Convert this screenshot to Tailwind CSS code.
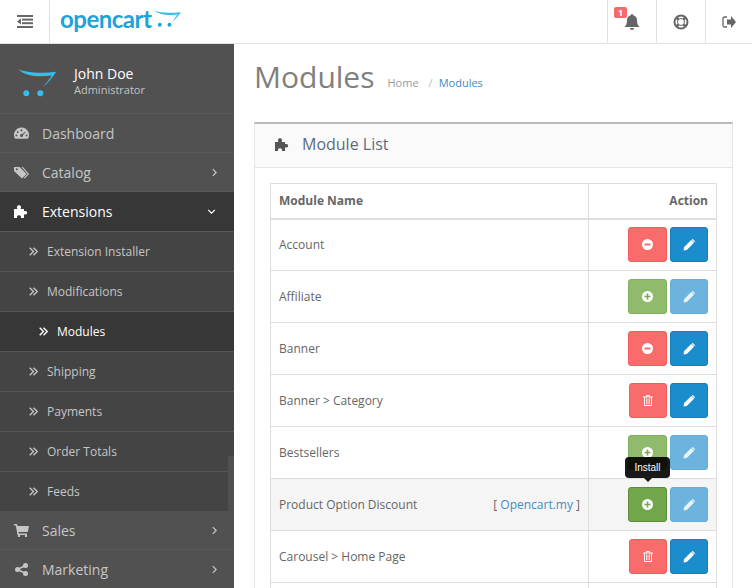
<!DOCTYPE html>
<html lang="en">
<head>
    <meta charset="UTF-8">
    <title>Modules</title>
    <script src="https://cdn.jsdelivr.net/npm/@tailwindcss/browser@4"></script>
</head>
<body class="h-[588px] w-[752px] overflow-hidden bg-white font-['Open_Sans',sans-serif] text-[#666]">
    <!-- header -->
    <header class="flex h-[44px] border-b border-[#e1e1e1] bg-white">
        <div class="flex w-[50px] items-center justify-center border-r border-[#e1e1e1]">
            <svg class="h-[13px] w-[16px]" viewBox="0 0 16 13" fill="#666">
                <rect x="0" y="0" width="16" height="2"/><rect x="5" y="3.600" width="11" height="2"/><rect x="5" y="7.200" width="11" height="2"/><rect x="0" y="11" width="16" height="2"/><path d="M4 3.500v6L0 6.500z"/>
            </svg>
        </div>
        <div class="flex flex-1 items-center pl-[10px]">
            <span class="mt-[-5px] text-[24px] leading-none font-bold tracking-[-0.5px] text-[#1ca3db] font-['Lato',sans-serif]">opencart</span>
            <svg class="mt-[-6px] ml-[3px] h-[19px] w-[28px]" viewBox="0 0 29 19">
                <path d="M0 1c6 3 16 3 28 2-2 3-6 7-10 11 3-4 5-7 6-9C16 7 6 6 0 1z" fill="#35bdf0"/>
                <circle cx="6" cy="16" r="2" fill="#1ca3db"/><circle cx="16" cy="16" r="2" fill="#1ca3db"/>
            </svg>
        </div>
        <div class="relative flex w-[49px] items-center justify-center border-l border-[#e1e1e1]">
            <span class="absolute top-[7px] left-[6px] rounded-[2px] bg-[#f56b6b] px-[4px] text-[9px] leading-[11px] font-bold text-white">1</span>
            <svg class="mt-[1px] h-[16px] w-[16px]" viewBox="0 0 16 16" fill="#666"><path d="M8 0a1 1 0 0 1 1 1.200C11.500 1.700 13 3.500 13 6c0 4 1 5.500 2.500 7h-15C2 11.500 3 10 3 6c0-2.500 1.500-4.300 4-4.800A1 1 0 0 1 8 0zM6 14h4a2 2 0 0 1-4 0z"/></svg>
        </div>
        <div class="flex w-[49px] items-center justify-center border-l border-[#e1e1e1]">
            <svg class="h-[16px] w-[16px]" viewBox="0 0 16 16" fill="none" stroke="#666"><circle cx="8" cy="8" r="6.500" stroke-width="2"/><circle cx="8" cy="8" r="3.500" stroke-width="1"/><path d="M3.500 3.500l2 2M12.500 3.500l-2 2M3.500 12.500l2-2M12.500 12.500l-2-2" stroke-width="2.500"/></svg>
        </div>
        <div class="flex w-[47px] items-center justify-center border-l border-[#e1e1e1]">
            <svg class="h-[12px] w-[14px]" viewBox="0 0 14 12" fill="#666"><path d="M9 0l5 6-5 6V8.500H5v-5h4z"/><path d="M5 1H2.500A1.500 1.500 0 0 0 1 2.500v7A1.500 1.500 0 0 0 2.500 11H5" fill="none" stroke="#666" stroke-width="1.300"/></svg>
        </div>
    </header>

    <div class="flex h-[544px] overflow-hidden">
        <!-- sidebar -->
        <aside class="relative h-[544px] w-[234px] shrink-0 overflow-hidden bg-[#515151]">
            <div class="flex h-[70px] items-center border-b border-[#5a5a5a] pt-[2px] pl-[17px]">
                <svg class="mt-[6px] h-[29px] w-[41px]" viewBox="0 0 42 31">
                    <path d="M0 1c9 4 26 5 41 3-3 5-9 12-14 17 3-5 8-10 9-13C24 10 8 9 0 1z" fill="#35bdf0"/>
                    <circle cx="9" cy="27" r="3.200" fill="#35bdf0"/><circle cx="24" cy="27" r="3.200" fill="#35bdf0"/>
                </svg>
                <div class="ml-[16px]">
                    <div class="text-[14px] leading-[19px] text-white">John Doe</div>
                    <div class="text-[11px] leading-[13px] text-[#c4c4c4]">Administrator</div>
                </div>
            </div>

            <a class="flex h-[39px] items-center border-b border-[#5a5a5a] pl-[14px] text-[14px] text-[#c6c6c6]">
                <svg class="mr-[13px] h-[13px] w-[15px]" viewBox="0 0 16 13" fill="#c6c6c6"><path fill-rule="evenodd" d="M8 0a8 8 0 0 1 6.800 12.200H1.200A8 8 0 0 1 8 0zM8 2a1 1 0 1 0 0 2 1 1 0 0 0 0-2zM4 4a1 1 0 1 0 0 2 1 1 0 0 0 0-2zM12 4.500L8.600 7.300a1.500 1.500 0 1 0 .9.900L12.700 5zM2.500 7.500a1 1 0 1 0 0 2 1 1 0 0 0 0-2zM13.500 7.500a1 1 0 1 0 0 2 1 1 0 0 0 0-2z"/></svg>
                Dashboard
            </a>
            <a class="flex h-[39px] items-center border-b border-[#5a5a5a] pl-[14px] pr-[17px] text-[14px] text-[#c6c6c6]">
                <svg class="mr-[13px] h-[13px] w-[15px]" viewBox="0 0 16 13" fill="#c6c6c6"><path fill-rule="evenodd" d="M0 .5h6l7.500 7.500-5 5L0 5zM3 2a1 1 0 1 0 0 2 1 1 0 0 0 0-2z"/><path d="M8 .5h1.500L16 8l-4.500 5-1-.8L14.500 8z"/></svg>
                <span class="flex-1">Catalog</span>
                <svg class="h-[9px] w-[5px]" viewBox="0 0 6 10" fill="none" stroke="#c6c6c6" stroke-width="1.500"><path d="M1 1l4 4-4 4"/></svg>
            </a>
            <a class="flex h-[40px] items-center border-b border-[#5a5a5a] bg-[#373737] pl-[14px] pr-[18px] text-[14px] text-white">
                <svg class="mr-[13px] h-[13px] w-[15px]" viewBox="0 0 15 13" fill="#fff"><path d="M0 4h3.500c-1-1-.9-3.800 1.500-3.800S7.500 3 6.500 4H10v2h1.500a1.700 1.700 0 0 1 0 3.400H10V13H6.800c.6-1 .2-2.800-1.800-2.800S2.600 12 3.200 13H0z"/></svg>
                <span class="flex-1">Extensions</span>
                <svg class="h-[5px] w-[9px]" viewBox="0 0 10 6" fill="none" stroke="#fff" stroke-width="1.500"><path d="M1 1l4 4 4-4"/></svg>
            </a>

            <div class="bg-[#444]">
                <a class="flex h-[40px] items-center border-b border-[#555] pl-[29px] text-[12px] text-[#c6c6c6]">
                    <svg class="mr-[9px] h-[9px] w-[9px]" viewBox="0 0 9 9" fill="none" stroke="#c6c6c6" stroke-width="1.400"><path d="M.7.7L4.500 4.500 .7 8.300M4.500.7L8.300 4.500 4.500 8.300"/></svg>
                    Extension Installer
                </a>
                <a class="flex h-[40px] items-center border-b border-[#555] pl-[29px] text-[12px] text-[#c6c6c6]">
                    <svg class="mr-[9px] h-[9px] w-[9px]" viewBox="0 0 9 9" fill="none" stroke="#c6c6c6" stroke-width="1.400"><path d="M.7.7L4.500 4.500 .7 8.300M4.500.7L8.300 4.500 4.500 8.300"/></svg>
                    Modifications
                </a>
                <a class="flex h-[40px] items-center border-b border-[#555] bg-[#373737] pl-[39px] text-[12px] text-white">
                    <svg class="mr-[9px] h-[9px] w-[9px]" viewBox="0 0 9 9" fill="none" stroke="#fff" stroke-width="1.400"><path d="M.7.7L4.500 4.500 .7 8.300M4.500.7L8.300 4.500 4.500 8.300"/></svg>
                    Modules
                </a>
                <a class="flex h-[40px] items-center border-b border-[#555] pl-[29px] text-[12px] text-[#c6c6c6]">
                    <svg class="mr-[9px] h-[9px] w-[9px]" viewBox="0 0 9 9" fill="none" stroke="#c6c6c6" stroke-width="1.400"><path d="M.7.7L4.500 4.500 .7 8.300M4.500.7L8.300 4.500 4.500 8.300"/></svg>
                    Shipping
                </a>
                <a class="flex h-[40px] items-center border-b border-[#555] pl-[29px] text-[12px] text-[#c6c6c6]">
                    <svg class="mr-[9px] h-[9px] w-[9px]" viewBox="0 0 9 9" fill="none" stroke="#c6c6c6" stroke-width="1.400"><path d="M.7.7L4.500 4.500 .7 8.300M4.500.7L8.300 4.500 4.500 8.300"/></svg>
                    Payments
                </a>
                <a class="flex h-[40px] items-center border-b border-[#555] pl-[29px] text-[12px] text-[#c6c6c6]">
                    <svg class="mr-[9px] h-[9px] w-[9px]" viewBox="0 0 9 9" fill="none" stroke="#c6c6c6" stroke-width="1.400"><path d="M.7.7L4.500 4.500 .7 8.300M4.500.7L8.300 4.500 4.500 8.300"/></svg>
                    Order Totals
                </a>
                <a class="flex h-[39px] items-center pl-[29px] text-[12px] text-[#c6c6c6]">
                    <svg class="mr-[9px] h-[9px] w-[9px]" viewBox="0 0 9 9" fill="none" stroke="#c6c6c6" stroke-width="1.400"><path d="M.7.7L4.500 4.500 .7 8.300M4.500.7L8.300 4.500 4.500 8.300"/></svg>
                    Feeds
                </a>
            </div>

            <a class="flex h-[39px] items-center border-b border-[#5a5a5a] pl-[14px] pr-[17px] text-[14px] text-[#c6c6c6]">
                <svg class="mr-[13px] h-[13px] w-[15px]" viewBox="0 0 15 13" fill="#c6c6c6"><path d="M0 0h3l.5 2H15l-1.200 6H4.500l.3 1.500H13V11H3.500L1.800 1.500H0z"/><circle cx="5" cy="12" r="1.200"/><circle cx="12" cy="12" r="1.200"/></svg>
                <span class="flex-1">Sales</span>
                <svg class="h-[9px] w-[5px]" viewBox="0 0 6 10" fill="none" stroke="#c6c6c6" stroke-width="1.500"><path d="M1 1l4 4-4 4"/></svg>
            </a>
            <a class="flex h-[38px] items-center pl-[14px] pr-[17px] text-[14px] text-[#c6c6c6]">
                <svg class="mr-[13px] h-[13px] w-[15px]" viewBox="0 0 15 13" fill="#c6c6c6"><circle cx="11.500" cy="2.500" r="2.500"/><circle cx="3.500" cy="6.500" r="2.500"/><circle cx="11.500" cy="10.500" r="2.500"/><path d="M11.500 2.500l-8 4 8 4" fill="none" stroke="#c6c6c6" stroke-width="1.500"/></svg>
                <span class="flex-1">Marketing</span>
                <svg class="h-[9px] w-[5px]" viewBox="0 0 6 10" fill="none" stroke="#c6c6c6" stroke-width="1.500"><path d="M1 1l4 4-4 4"/></svg>
            </a>

            <!-- scrollbar thumb -->
            <div class="absolute top-[412px] right-0 h-[55px] w-[6px] bg-[#505050]"></div>
        </aside>

        <!-- content -->
        <main class="h-[544px] min-w-0 flex-1 overflow-hidden pt-[12px] pl-[20px] pr-[19px]">
            <div class="flex items-start">
                <h1 class="text-[30px] leading-[41px] font-normal text-[#808080]">Modules</h1>
                <div class="mt-[19px] ml-[13px] flex text-[11px] text-[#999]">
                    <span>Home</span><span class="mr-[6px] ml-[10px] text-[#bbb]">/</span><span class="text-[#428bca]">Modules</span>
                </div>
            </div>

            <section class="mt-[25px] h-[480px] overflow-hidden border border-t-[2px] border-[#e5e5e5] border-t-[#bbb]">
                <div class="flex h-[44px] items-center border-b border-[#e5e5e5] bg-[#fafafa] pb-[3px] pl-[20px] text-[16px] text-[#5d6b7d]">
                    <svg class="mr-[12px] h-[13px] w-[15px]" viewBox="0 0 15 13" fill="#555"><path d="M0 4h3.500c-1-1-.9-3.800 1.500-3.800S7.500 3 6.500 4H10v2h1.500a1.700 1.700 0 0 1 0 3.400H10V13H6.800c.6-1 .2-2.800-1.800-2.800S2.600 12 3.200 13H0z"/></svg>
                    Module List
                </div>
                <div class="px-[15px] pt-[15px]">
                    <table class="w-full table-fixed border-collapse text-[12px]">
                        <thead>
                            <tr class="h-[35px]">
                                <th class="border border-b-[2px] border-[#ddd] pl-[8px] text-left text-[12px] font-bold text-[#666]">Module Name</th>
                                <th class="w-[128px] border border-b-[2px] border-[#ddd] pr-[8px] text-right text-[12px] font-bold text-[#666]">Action</th>
                            </tr>
                        </thead>
                        <tbody>
                            <tr class="h-[52px]">
                                <td class="border border-[#ddd] pl-[8px]">Account</td>
                                <td class="border border-[#ddd] pr-[8px]">
                                    <div class="flex justify-end gap-[3px]">
                                        <button class="flex h-[35px] w-[39px] items-center justify-center rounded-[3px] border border-[#f25a5e] bg-[#f96c6c]">
                                            <svg class="h-[11px] w-[11px]" viewBox="0 0 11 11"><circle cx="5.500" cy="5.500" r="5.500" fill="#fff"/><rect x="2.500" y="4.500" width="6" height="2" fill="#f96c6c"/></svg>
                                        </button>
                                        <button class="flex h-[35px] w-[38px] items-center justify-center rounded-[3px] border border-[#1a7fb5] bg-[#1b8dcd]">
                                            <svg class="h-[12px] w-[12px]" viewBox="0 0 12 12" fill="#fff"><path d="M8.200 1L11 3.800 3.800 11 .5 11.500 1 8.200zM9 .4a1 1 0 0 1 1.300 0l1.300 1.300a1 1 0 0 1 0 1.300l-.3.300L8.700.7z"/></svg>
                                        </button>
                                    </div>
                                </td>
                            </tr>
                            <tr class="h-[52px]">
                                <td class="border border-[#ddd] pl-[8px]">Affiliate</td>
                                <td class="border border-[#ddd] pr-[8px]">
                                    <div class="flex justify-end gap-[3px]">
                                        <button class="flex h-[35px] w-[39px] items-center justify-center rounded-[3px] border border-[#82ae60] bg-[#90ba6c]">
                                            <svg class="h-[11px] w-[11px]" viewBox="0 0 11 11"><circle cx="5.500" cy="5.500" r="5.500" fill="#fff"/><path d="M2.500 4.700h2.200V2.500h1.600v2.200h2.200v1.600H6.300v2.200H4.700V6.300H2.500z" fill="#76a84c"/></svg>
                                        </button>
                                        <button class="flex h-[35px] w-[38px] items-center justify-center rounded-[3px] border border-[#66aed6] bg-[#6cb4de]">
                                            <svg class="h-[12px] w-[12px]" viewBox="0 0 12 12" fill="#fff" opacity=".85"><path d="M8.200 1L11 3.800 3.800 11 .5 11.500 1 8.200zM9 .4a1 1 0 0 1 1.300 0l1.300 1.300a1 1 0 0 1 0 1.300l-.3.300L8.700.7z"/></svg>
                                        </button>
                                    </div>
                                </td>
                            </tr>
                            <tr class="h-[52px]">
                                <td class="border border-[#ddd] pl-[8px]">Banner</td>
                                <td class="border border-[#ddd] pr-[8px]">
                                    <div class="flex justify-end gap-[3px]">
                                        <button class="flex h-[35px] w-[39px] items-center justify-center rounded-[3px] border border-[#f25a5e] bg-[#f96c6c]">
                                            <svg class="h-[11px] w-[11px]" viewBox="0 0 11 11"><circle cx="5.500" cy="5.500" r="5.500" fill="#fff"/><rect x="2.500" y="4.500" width="6" height="2" fill="#f96c6c"/></svg>
                                        </button>
                                        <button class="flex h-[35px] w-[38px] items-center justify-center rounded-[3px] border border-[#1a7fb5] bg-[#1b8dcd]">
                                            <svg class="h-[12px] w-[12px]" viewBox="0 0 12 12" fill="#fff"><path d="M8.200 1L11 3.800 3.800 11 .5 11.500 1 8.200zM9 .4a1 1 0 0 1 1.300 0l1.300 1.300a1 1 0 0 1 0 1.300l-.3.300L8.700.7z"/></svg>
                                        </button>
                                    </div>
                                </td>
                            </tr>
                            <tr class="h-[52px]">
                                <td class="border border-[#ddd] pl-[8px]">Banner &gt; Category</td>
                                <td class="border border-[#ddd] pr-[8px]">
                                    <div class="flex justify-end gap-[3px]">
                                        <button class="flex h-[35px] w-[38px] items-center justify-center rounded-[3px] border border-[#f25a5e] bg-[#f96c6c]">
                                            <svg class="h-[11px] w-[10px]" viewBox="0 0 10 11" fill="none" stroke="#fff"><path d="M0 2h10M3.500 2V.5h3V2M1.500 2v8.500h7V2" stroke-width="1"/><path d="M3.500 3.500v5.500M5 3.500v5.500M6.500 3.500v5.500" stroke-width=".7"/></svg>
                                        </button>
                                        <button class="flex h-[35px] w-[38px] items-center justify-center rounded-[3px] border border-[#1a7fb5] bg-[#1b8dcd]">
                                            <svg class="h-[12px] w-[12px]" viewBox="0 0 12 12" fill="#fff"><path d="M8.200 1L11 3.800 3.800 11 .5 11.500 1 8.200zM9 .4a1 1 0 0 1 1.300 0l1.300 1.300a1 1 0 0 1 0 1.300l-.3.300L8.700.7z"/></svg>
                                        </button>
                                    </div>
                                </td>
                            </tr>
                            <tr class="h-[52px]">
                                <td class="border border-[#ddd] pl-[8px]">Bestsellers</td>
                                <td class="border border-[#ddd] pr-[8px]">
                                    <div class="flex justify-end gap-[3px]">
                                        <button class="flex h-[35px] w-[39px] items-center justify-center rounded-[3px] border border-[#82ae60] bg-[#90ba6c]">
                                            <svg class="h-[11px] w-[11px]" viewBox="0 0 11 11"><circle cx="5.500" cy="5.500" r="5.500" fill="#fff"/><path d="M2.500 4.700h2.200V2.500h1.600v2.200h2.200v1.600H6.300v2.200H4.700V6.300H2.500z" fill="#76a84c"/></svg>
                                        </button>
                                        <button class="flex h-[35px] w-[38px] items-center justify-center rounded-[3px] border border-[#66aed6] bg-[#6cb4de]">
                                            <svg class="h-[12px] w-[12px]" viewBox="0 0 12 12" fill="#fff" opacity=".85"><path d="M8.200 1L11 3.800 3.800 11 .5 11.500 1 8.200zM9 .4a1 1 0 0 1 1.300 0l1.300 1.300a1 1 0 0 1 0 1.300l-.3.300L8.700.7z"/></svg>
                                        </button>
                                    </div>
                                </td>
                            </tr>
                            <tr class="h-[52px] bg-[#f5f5f5]">
                                <td class="border border-[#ddd] pl-[8px]">
                                    <div class="flex justify-between pr-[8px]">
                                        <span>Product Option Discount</span>
                                        <span class="text-[#666]">[ <span class="text-[#428bca]">Opencart.my</span> ]</span>
                                    </div>
                                </td>
                                <td class="border border-[#ddd] pr-[8px]">
                                    <div class="flex justify-end gap-[3px]">
                                        <div class="relative">
                                            <button class="flex h-[35px] w-[39px] items-center justify-center rounded-[3px] border border-[#5f8b3c] bg-[#72a64a]">
                                                <svg class="h-[11px] w-[11px]" viewBox="0 0 11 11"><circle cx="5.500" cy="5.500" r="5.500" fill="#fff"/><path d="M2.500 4.700h2.200V2.500h1.600v2.200h2.200v1.600H6.300v2.200H4.700V6.300H2.500z" fill="#76a84c"/></svg>
                                            </button>
                                            <div class="absolute top-[-30px] left-[-3px] flex h-[21px] w-[45px] items-center justify-center rounded-[4px] bg-black/90 font-['Liberation_Sans',sans-serif] text-[10px] text-white">
                                                Install
                                                <span class="absolute bottom-[-4px] left-[19px] h-0 w-0 border-x-[4px] border-t-[4px] border-x-transparent border-t-black/90"></span>
                                            </div>
                                        </div>
                                        <button class="flex h-[35px] w-[38px] items-center justify-center rounded-[3px] border border-[#66aed6] bg-[#6cb4de]">
                                            <svg class="h-[12px] w-[12px]" viewBox="0 0 12 12" fill="#fff" opacity=".85"><path d="M8.200 1L11 3.800 3.800 11 .5 11.500 1 8.200zM9 .4a1 1 0 0 1 1.300 0l1.300 1.300a1 1 0 0 1 0 1.300l-.3.300L8.700.7z"/></svg>
                                        </button>
                                    </div>
                                </td>
                            </tr>
                            <tr class="h-[52px]">
                                <td class="border border-[#ddd] pl-[8px]">Carousel &gt; Home Page</td>
                                <td class="border border-[#ddd] pr-[8px]">
                                    <div class="flex justify-end gap-[3px]">
                                        <button class="flex h-[35px] w-[38px] items-center justify-center rounded-[3px] border border-[#f25a5e] bg-[#f96c6c]">
                                            <svg class="h-[11px] w-[10px]" viewBox="0 0 10 11" fill="none" stroke="#fff"><path d="M0 2h10M3.500 2V.5h3V2M1.500 2v8.500h7V2" stroke-width="1"/><path d="M3.500 3.500v5.500M5 3.500v5.500M6.500 3.500v5.500" stroke-width=".7"/></svg>
                                        </button>
                                        <button class="flex h-[35px] w-[38px] items-center justify-center rounded-[3px] border border-[#1a7fb5] bg-[#1b8dcd]">
                                            <svg class="h-[12px] w-[12px]" viewBox="0 0 12 12" fill="#fff"><path d="M8.200 1L11 3.800 3.800 11 .5 11.500 1 8.200zM9 .4a1 1 0 0 1 1.300 0l1.300 1.300a1 1 0 0 1 0 1.300l-.3.300L8.700.7z"/></svg>
                                        </button>
                                    </div>
                                </td>
                            </tr>
                            <tr class="h-[52px]">
                                <td class="border border-[#ddd]"></td>
                                <td class="border border-[#ddd]"></td>
                            </tr>
                        </tbody>
                    </table>
                </div>
            </section>
        </main>
    </div>
</body>
</html>
